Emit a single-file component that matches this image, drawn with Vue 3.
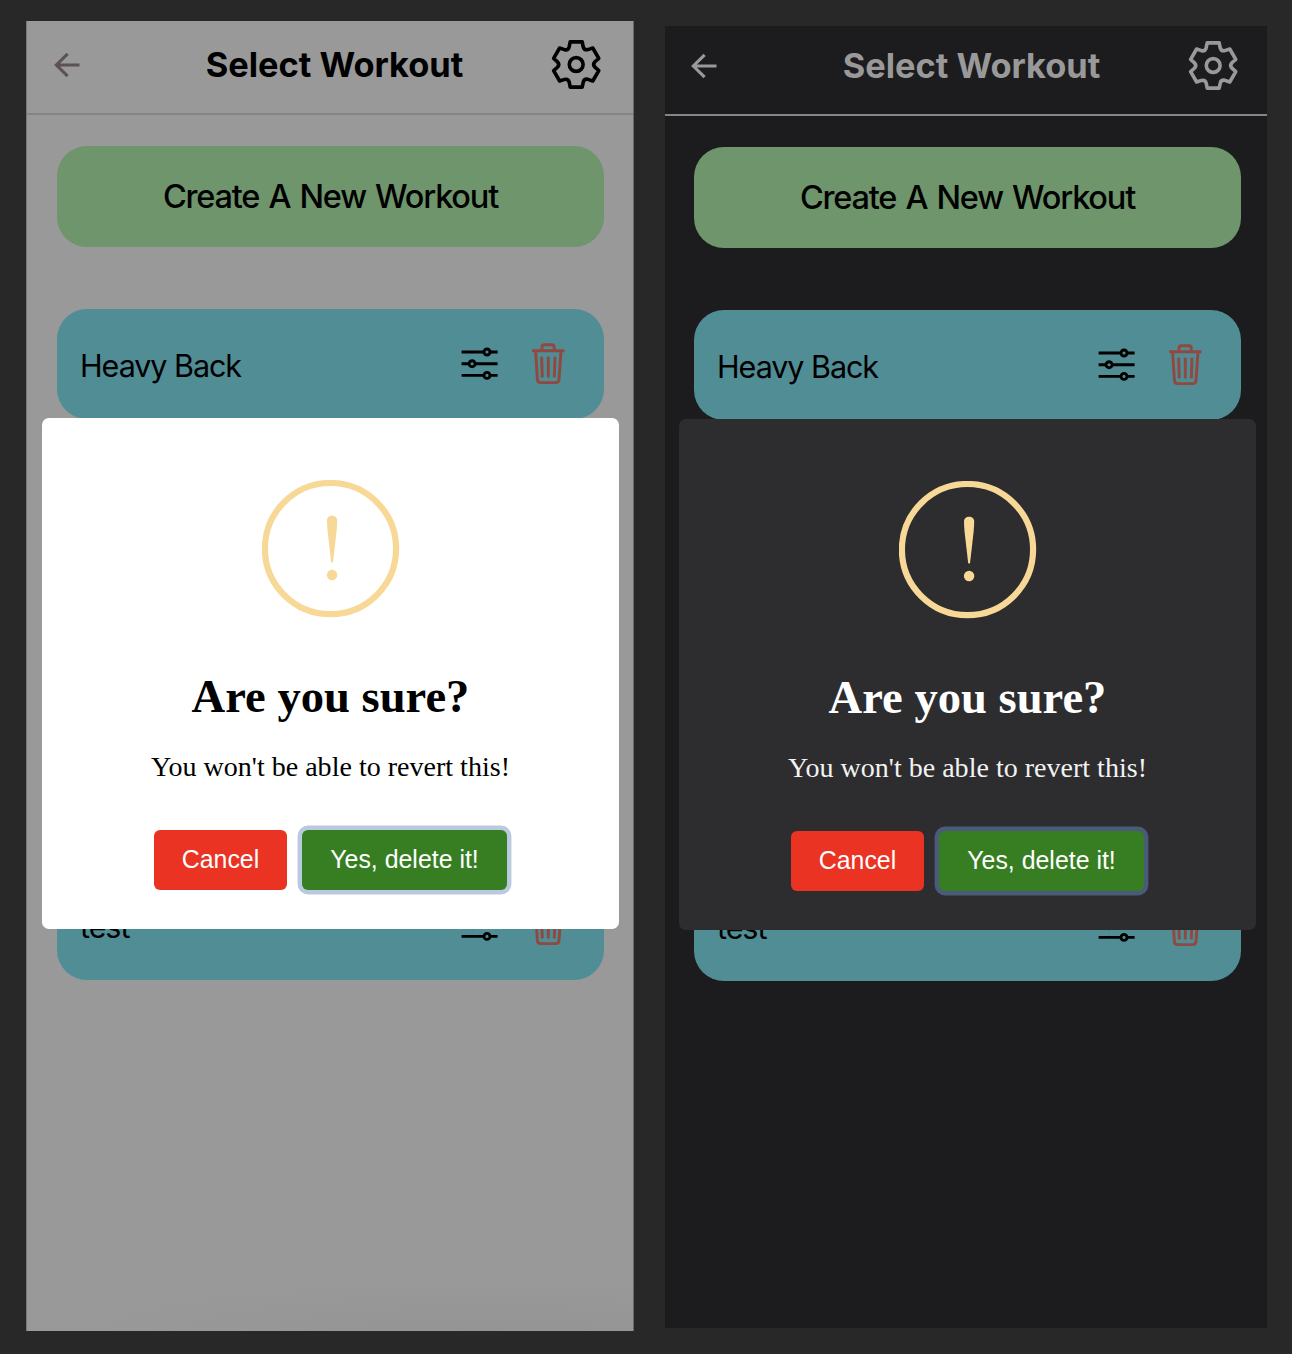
<script setup>
const phones = [
  { theme: 'light' },
  { theme: 'dark' },
]
const workouts = ['Heavy Back', 'test']

// One tooth of the gear, repeated every 60 degrees around the centre.
const tooth = [
  [-6, -22.6], [6, -22.6], [7, -17.6], [8.1, -14], [11.7, -14.9],
]
const gearPath = (() => {
  let d = ''
  for (let i = 0; i < 6; i++) {
    const a = (i * Math.PI) / 3
    const p = tooth.map(([x, y]) =>
      `${(x * Math.cos(a) - y * Math.sin(a)).toFixed(2)} ${(x * Math.sin(a) + y * Math.cos(a)).toFixed(2)}`)
    d += `${i ? 'L' : 'M'}${p[0]}L${p[1]}L${p[2]}Q${p[3]} ${p[4]}`
  }
  return d + 'Z'
})()
</script>

<template>
  <main class="board">
    <section v-for="phone in phones" :key="phone.theme" class="phone" :class="phone.theme">
      <header class="bar">
        <svg class="back" width="28" height="28" viewBox="0 0 28 28">
          <path d="M26.5 14H3.2M14.6 2.8L3.3 14l11.3 11.2" />
        </svg>
        <h1>Select Workout</h1>
        <svg class="gear" width="52" height="52" viewBox="-26.2 -25.5 52 52">
          <path :d="gearPath" />
          <circle r="6.9" />
        </svg>
      </header>

      <div class="content">
        <button class="create">Create A New Workout</button>
        <div class="list">
          <article v-for="name in workouts" :key="name" class="card">
            <span class="name">{{ name }}</span>
            <svg class="sliders" width="37" height="34" viewBox="-.6 .3 37 34">
              <path d="M0 5.3h22.4M28.4 5.3H36M0 17h7.5M13.5 17H36M0 28.7h22.4M28.4 28.7H36" />
              <circle cx="25.4" cy="5.3" r="3" />
              <circle cx="10.5" cy="17" r="3" />
              <circle cx="25.4" cy="28.7" r="3" />
            </svg>
            <svg class="trash" width="34" height="42" viewBox="-.3 .4 34 42">
              <path d="M.9 8.1h32.2M10.7 8V4.4Q10.7 2.2 12.9 2.2h7.8Q22.9 2.2 22.9 4.4V8M4.3 8.4l1.8 28.4Q6.3 40 9.5 40h14.8Q27.5 40 27.7 36.8L29.7 8.4" />
              <path d="M10.3 14.2l.7 20.6M17 14.2v20.6M23.7 14.2l-.7 20.6" />
            </svg>
          </article>
        </div>
      </div>

      <div class="modal" role="dialog">
        <svg class="warning" width="138" height="138" viewBox="0 0 138 138">
          <circle cx="68.5" cy="68.6" r="65.6" />
          <path d="M65 40.5C65 37.4 67.2 35.7 70.1 35.7S75.2 37.4 75.2 40.5Q75.2 45 74.6 51L71.1 81.6Q70.1 84 69.1 81.6L65.6 51Q65 45 65 40.5Z" />
          <circle class="dot" cx="70.1" cy="95" r="5.2" />
        </svg>
        <h2>Are you sure?</h2>
        <p>You won't be able to revert this!</p>
        <div class="actions">
          <button class="cancel">Cancel</button>
          <button class="confirm">Yes, delete it!</button>
        </div>
      </div>
    </section>
  </main>
</template>

<style>
body {
  background: #282828;
}
</style>

<style scoped>
.board {
  box-sizing: border-box;
  width: 1292px;
  height: 1354px;
  padding: 21px 25px 0 26px;
  display: flex;
  justify-content: space-between;
  align-items: flex-start;
  background: #282828;
  border-bottom: 2px solid #2b282b;
  overflow: hidden;
}
.phone {
  position: relative;
  box-sizing: border-box;
  width: 608px;
  height: 1310px;
  font-family: Inter, "Liberation Sans", sans-serif;
  color: #000;
}
.light {
  background: radial-gradient(ellipse 420px 50px at 75% 100%, #949494, #999 100%);
  border-left: 1px solid #767676;
  border-right: 1px solid #6a6a6a;
}
.dark {
  width: 602px;
  height: 1302px;
  margin-top: 5px;
  background: #1c1c1e;
}
.bar {
  box-sizing: border-box;
  height: 94px;
  padding: 0 31px 5px 26px;
  display: flex;
  align-items: center;
  justify-content: space-between;
  border-bottom: 2px solid #858585;
}
.dark .bar {
  height: 90px;
  padding: 0 28px 9px 25px;
  border-color: #858585;
}
svg {
  display: block;
  flex: none;
  fill: none;
}
.back {
  stroke: #5c5252;
  stroke-width: 3.1;
}
.gear {
  stroke: #000;
  stroke-width: 3.6;
  stroke-linejoin: round;
}
.dark .back,
.dark .gear {
  stroke: #999;
}
h1 {
  margin: 0 0 0 38px;
  font-size: 34.4px;
  line-height: 42px;
  font-weight: 700;
}
.dark h1 {
  color: #999;
}
.content {
  padding: 31px 29px 0 30px;
}
.dark .content {
  padding: 31px 26px 0 29px;
}
button {
  display: block;
  border: 0;
  padding: 0;
  margin: 0;
  font: inherit;
  color: inherit;
}
.create {
  width: 547px;
  height: 101px;
  border-radius: 30px;
  background: #6e956b;
  font-size: 32.5px;
  font-weight: 500;
  letter-spacing: -1.2px;
  word-spacing: 1.7px;
}
.list {
  width: 547px;
  height: 671px;
  margin-top: 62px;
  display: flex;
  flex-direction: column;
  justify-content: space-between;
}
.card {
  box-sizing: border-box;
  height: 109.5px;
  padding: 0 39px 0 23px;
  display: flex;
  align-items: center;
  border-radius: 30px;
  background: #508d95;
}
.name {
  flex: 1;
  font-size: 30.5px;
  padding-top: 3px;
  letter-spacing: -1.05px;
}
.sliders {
  margin-right: 33px;
  stroke: #000;
  stroke-width: 2.9;
}
.trash {
  stroke: #90483f;
  stroke-width: 2.9;
}
.modal {
  position: absolute;
  box-sizing: border-box;
  left: 15px;
  top: 396.5px;
  width: 577px;
  height: 511.5px;
  padding-top: 62px;
  display: flex;
  flex-direction: column;
  align-items: center;
  border-radius: 7px;
  background: #fff;
  font-family: "Liberation Serif", serif;
}
.dark .modal {
  left: 14px;
  top: 392.5px;
  background: #2d2d2f;
  color: #fff;
}
.warning {
  stroke: #f8d896;
  stroke-width: 6.2;
}
.warning path,
.warning .dot {
  fill: #f8d896;
  stroke: none;
}
h2 {
  margin: 50px 0 0;
  font-size: 46.6px;
  line-height: 56px;
  font-weight: 700;
}
p {
  margin: 26px 0 0;
  font-size: 28.05px;
  line-height: 34px;
}
.dark p {
  color: #f2f2f2;
}
.actions {
  margin-top: 46px;
  display: flex;
  gap: 15px;
}
.actions button {
  height: 60px;
  border-radius: 6px;
  font-family: "Liberation Sans", Arial, sans-serif;
  font-size: 24.9px;
  color: #fff;
}
.cancel {
  width: 133px;
  background: #ea3323;
}
.confirm {
  width: 205px;
  background: #377e22;
  box-shadow: 0 0 0 4.4px #b8c9e0;
}
.dark .confirm {
  box-shadow: 0 0 0 4.4px #4a5a79;
}
</style>
